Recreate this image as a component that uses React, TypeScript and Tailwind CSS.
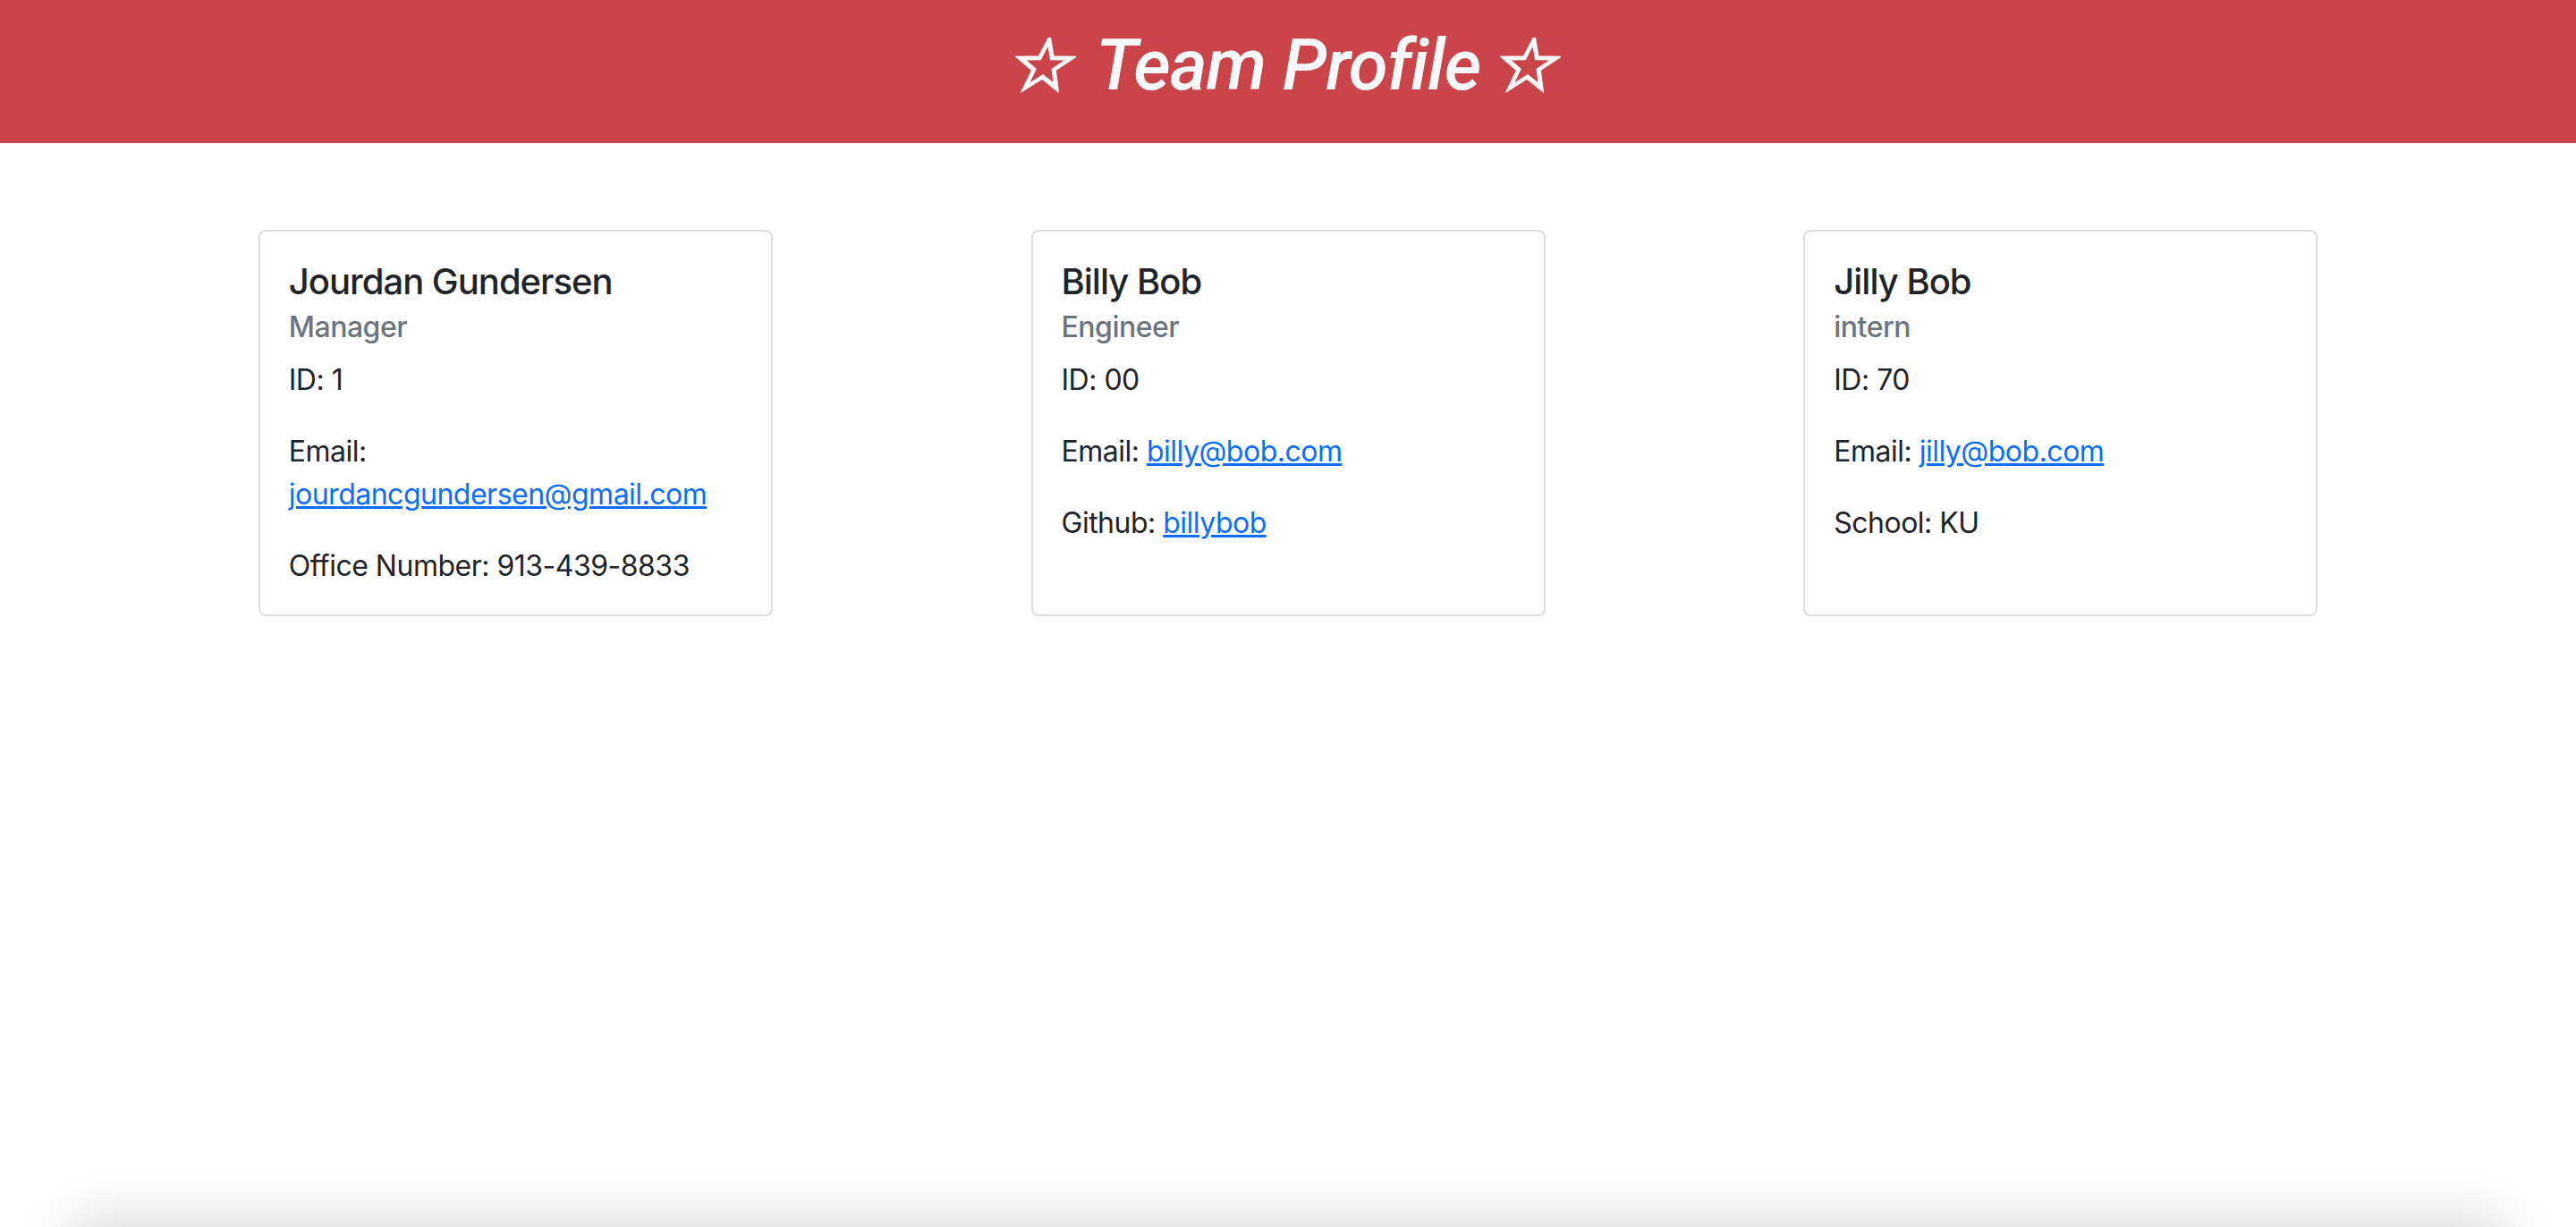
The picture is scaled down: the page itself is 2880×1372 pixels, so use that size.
const team = [
  {
    name: "Jourdan Gundersen",
    role: "Manager",
    id: "1",
    email: "jourdancgundersen@gmail.com",
    extra: { label: "Office Number", value: "913-439-8833" },
  },
  {
    name: "Billy Bob",
    role: "Engineer",
    id: "00",
    email: "billy@bob.com",
    extra: { label: "Github", value: "billybob", link: true },
  },
  {
    name: "Jilly Bob",
    role: "intern",
    id: "70",
    email: "jilly@bob.com",
    extra: { label: "School", value: "KU" },
  },
];

type Member = (typeof team)[number] & { extra: { label: string; value: string; link?: boolean } };

// контурная звезда ☆, наклонённая как курсив
function Star() {
  return (
    <svg viewBox="0 0 110 100" className="h-[62px] w-[68px] shrink-0" aria-hidden>
      <polygon
        transform="translate(12 0) skewX(-10)"
        points="50,4 61.2,36.6 95.7,37.2 68.1,57.9 78.2,90.8 50,71 21.8,90.8 31.9,57.9 4.3,37.2 38.8,36.6"
        fill="none"
        stroke="#f8f9fa"
        strokeWidth="8"
        strokeLinejoin="miter"
      />
    </svg>
  );
}

function Card({ m }: { m: Member }) {
  return (
    <div className="w-[575px] rounded-[8px] border-2 border-[#dfdfdf] bg-white">
      <div className="px-[32px] pt-[32px] pb-[30px]">
        <h5 className="mb-[16px] text-[40px] font-medium leading-[48px] tracking-[-1px] text-[#212529]">{m.name}</h5>
        <h6 className="-mt-[8px] mb-[16px] text-[32px] font-medium leading-[38px] tracking-[-0.5px] text-[#6c757d]">{m.role}</h6>
        <p className="mb-[32px]">ID: {m.id}</p>
        <p className="mb-[32px]">
          Email:{" "}
          <a href={`mailto:${m.email}`} className="text-[#0d6efd] underline">
            {m.email}
          </a>
        </p>
        <p>
          {m.extra.label}:{" "}
          {m.extra.link ? (
            <a href="#" className="text-[#0d6efd] underline">
              {m.extra.value}
            </a>
          ) : (
            m.extra.value
          )}
        </p>
      </div>
    </div>
  );
}

export default function App() {
  return (
    <div className="min-h-[1372px] bg-white font-['Inter',sans-serif] text-[32px] leading-[48px] tracking-[-0.5px] text-[#212529]">
      {/* шапка */}
      <header className="flex h-[160px] justify-center bg-[#cb444a] pt-[25px]">
        <h1 className="flex h-[96px] items-center gap-[22px] font-['Roboto',sans-serif] text-[80px] font-medium italic leading-[96px] tracking-[-1px] text-[#f8f9fa]">
          <Star />
          <span>Team Profile</span>
          <Star />
        </h1>
      </header>

      {/* карточки команды */}
      <main className="flex justify-evenly pt-[97px]">
        {team.map((m) => (
          <Card key={m.name} m={m as Member} />
        ))}
      </main>

      {/* тень снизу */}
      <div className="pointer-events-none fixed bottom-[-100px] left-[80px] right-[80px] h-[100px] shadow-[0_0_70px_rgba(0,0,0,0.2)]" />
    </div>
  );
}
